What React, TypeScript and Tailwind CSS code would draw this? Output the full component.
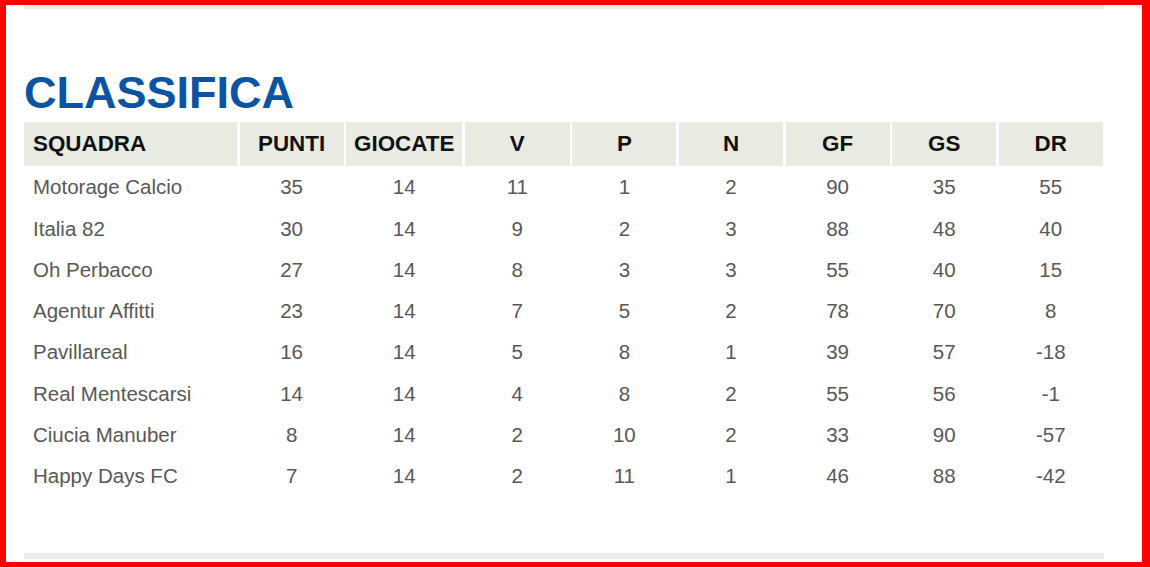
import React from 'react'

const headers = ['SQUADRA', 'PUNTI', 'GIOCATE', 'V', 'P', 'N', 'GF', 'GS', 'DR']

const rows: (string | number)[][] = [
	['Motorage Calcio', 35, 14, 11, 1, 2, 90, 35, 55],
	['Italia 82', 30, 14, 9, 2, 3, 88, 48, 40],
	['Oh Perbacco', 27, 14, 8, 3, 3, 55, 40, 15],
	['Agentur Affitti', 23, 14, 7, 5, 2, 78, 70, 8],
	['Pavillareal', 16, 14, 5, 8, 1, 39, 57, -18],
	['Real Mentescarsi', 14, 14, 4, 8, 2, 55, 56, -1],
	['Ciucia Manuber', 8, 14, 2, 10, 2, 33, 90, -57],
	['Happy Days FC', 7, 14, 2, 11, 1, 46, 88, -42],
]

const cols = 'grid grid-cols-[213px_104px_116px_105px_104px_104px_104px_104px_104px] gap-x-[2.6px]'

const App: React.FC = () => {
	return (
		<div
			className="box-border h-[567px] w-[1150px] overflow-hidden border-t-[5px] border-r-[8px] border-b-[5px] border-l-[6px] border-[#ff0000] bg-white"
			style={{ fontFamily: '"Liberation Sans", Arial, sans-serif' }}
		>
			<div className="flex h-full flex-col pl-[18px]">
				<div className="h-[4px] w-[1080px] bg-[#ebece5]"></div>

				<h1 className="mt-[61px] text-[45px] leading-none font-bold text-[#0a54a3]">CLASSIFICA</h1>

				<div className="mt-[7px] w-[1080px]">
					<div className={cols}>
						{headers.map((h, i) => (
							<div
								key={h}
								className={`flex h-[44px] items-center bg-[#e9eae2] text-[22.4px] font-bold text-[#111] ${
									i === 0 ? 'pl-[9px]' : 'justify-center'
								}`}
							>
								{h}
							</div>
						))}
					</div>

					{rows.map((r) => (
						<div key={r[0]} className={cols}>
							{r.map((v, i) => (
								<div
									key={i}
									className={`flex h-[41.3px] items-center pt-[2px] text-[20.5px] text-[#585858] ${
										i === 0 ? 'pl-[9px]' : 'justify-center'
									}`}
								>
									{v}
								</div>
							))}
						</div>
					))}
				</div>

				<div className="mt-auto mb-[3px] h-[6px] w-[1080px] bg-[#ebece5]"></div>
			</div>
		</div>
	)
}

export default App
